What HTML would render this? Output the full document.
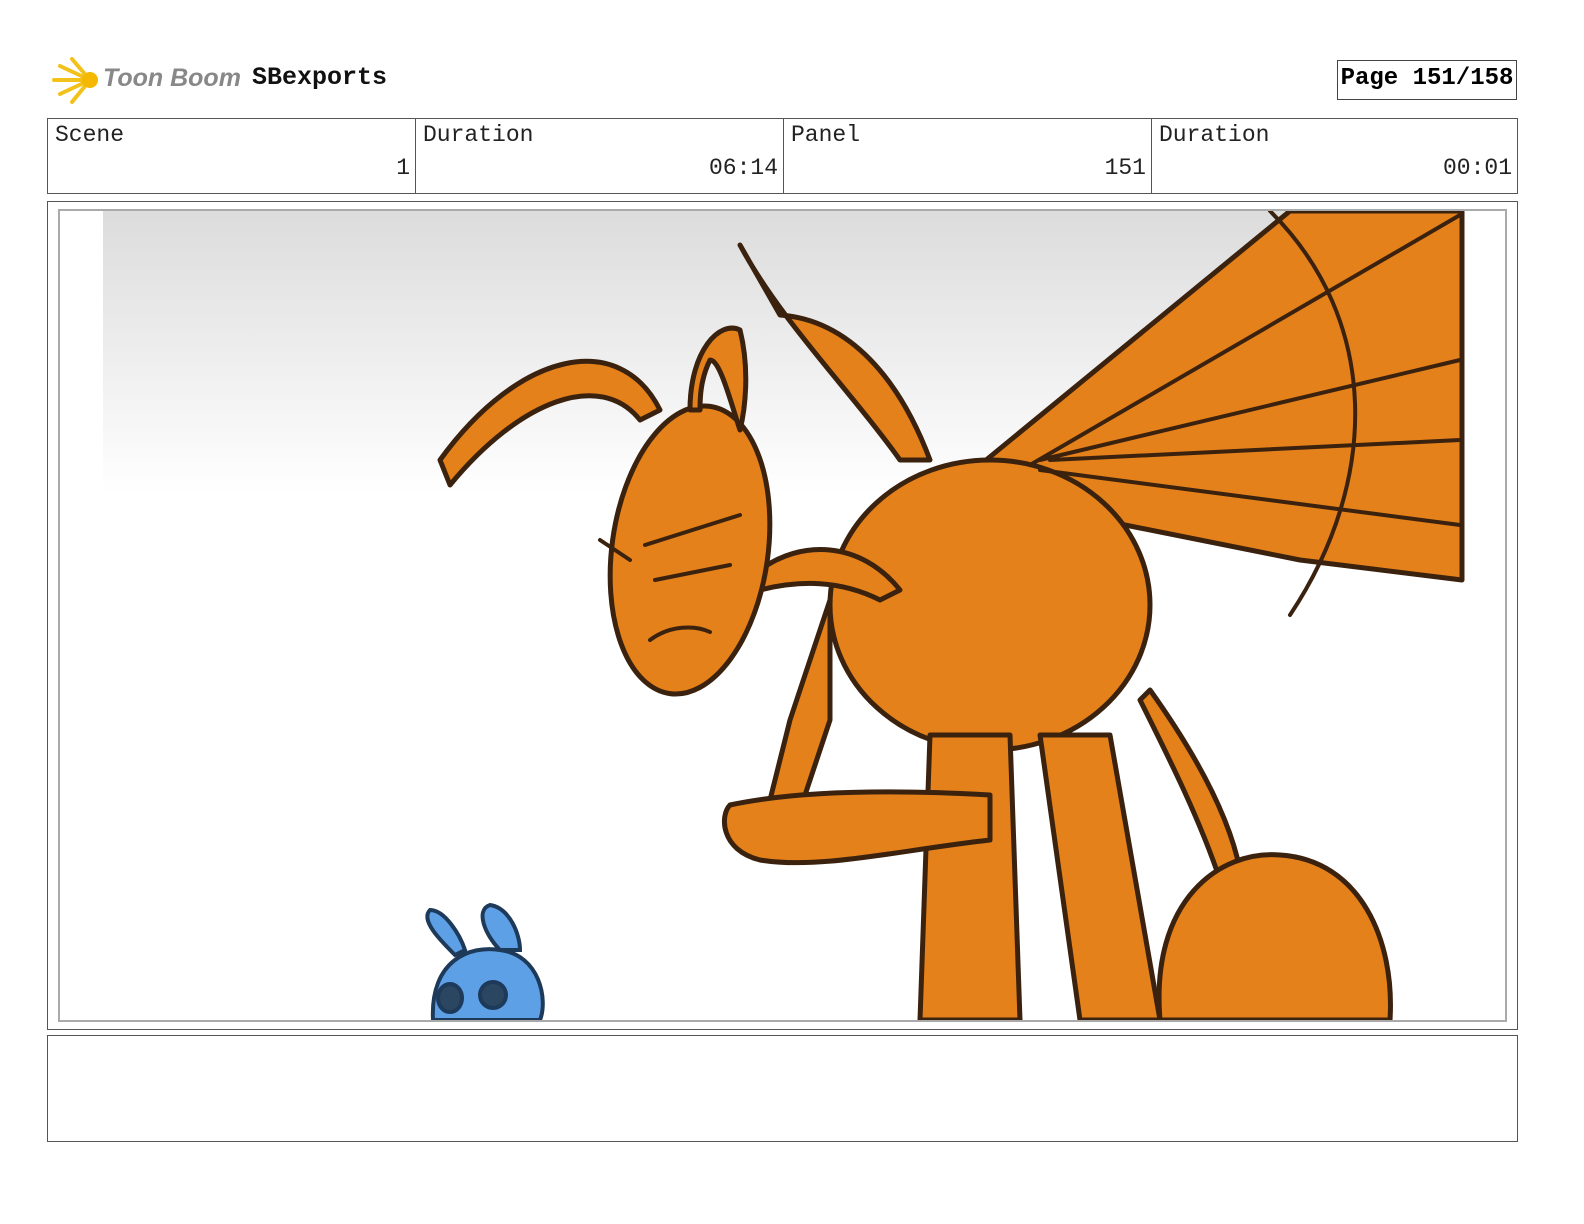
<!DOCTYPE html>
<html><head><style>
body{margin:0;width:1584px;height:1224px;background:#fff;position:relative;overflow:hidden;font-family:"Liberation Mono",monospace}
.a{position:absolute}
.cell{position:absolute;top:118px;height:76px;border:1px solid #555;box-sizing:border-box}
.lbl{position:absolute;left:7px;top:3px;font-size:23px;color:#222}
.val{position:absolute;right:5px;top:36px;font-size:23px;color:#222}
</style></head><body>
<svg class="a" style="left:50px;top:56px" width="52" height="50" viewBox="0 0 52 50">
<g stroke="#f2c21a" stroke-width="4" stroke-linecap="round">
<line x1="40" y1="24" x2="4" y2="24"/><line x1="40" y1="24" x2="10" y2="10"/><line x1="40" y1="24" x2="10" y2="38"/>
<line x1="40" y1="24" x2="22" y2="3"/><line x1="40" y1="24" x2="22" y2="46"/></g>
<circle cx="40" cy="24" r="8" fill="#f5b800"/></svg>
<div class="a" style="left:103px;top:64px;font-family:'Liberation Sans',sans-serif;font-style:italic;font-weight:bold;font-size:25px;color:#888">Toon Boom</div>
<div class="a" style="left:252px;top:63px;font-weight:bold;font-size:25px;color:#111">SBexports</div>
<div class="a" style="left:1337px;top:60px;width:180px;height:40px;border:1px solid #444;box-sizing:border-box;font-weight:bold;font-size:24px;text-align:center;line-height:36px">Page 151/158</div>
<div class="cell" style="left:47px;width:369px"><span class="lbl">Scene</span><span class="val">1</span></div>
<div class="cell" style="left:415px;width:369px"><span class="lbl">Duration</span><span class="val">06:14</span></div>
<div class="cell" style="left:783px;width:369px"><span class="lbl">Panel</span><span class="val">151</span></div>
<div class="cell" style="left:1151px;width:367px"><span class="lbl">Duration</span><span class="val">00:01</span></div>
<div class="a" style="left:47px;top:201px;width:1471px;height:829px;border:1px solid #555;box-sizing:border-box"></div>
<div class="a" style="left:58px;top:209px;width:1449px;height:813px;border:2px solid #aaa;box-sizing:border-box"></div>
<svg class="a" style="left:60px;top:211px" width="1445" height="809" viewBox="60 211 1445 809">
<defs><linearGradient id="g" x1="0" y1="0" x2="0" y2="1"><stop offset="0" stop-color="#dcdcdc"/><stop offset="0.35" stop-color="#fff"/></linearGradient></defs>
<rect x="103" y="211" width="1359" height="809" fill="url(#g)"/>
<g fill="#e5811a" stroke="#3b220f" stroke-width="5" stroke-linejoin="round">
<path d="M980 465 L1290 211 L1462 211 L1462 580 L1300 560 L1100 520 Z"/>
<path d="M740 245 C780 320 850 390 900 460 L930 460 C900 380 850 320 780 315 Z"/>
<ellipse cx="990" cy="605" rx="160" ry="145"/>
<path d="M930 735 L920 1020 L1020 1020 L1010 735 Z"/>
<path d="M1040 735 L1080 1020 L1160 1020 L1110 735 Z"/>
<path d="M1150 690 C1200 760 1230 820 1240 870 L1220 880 C1200 820 1170 760 1140 700 Z"/>
<path d="M1160 1020 C1150 900 1220 850 1280 855 C1360 860 1395 940 1390 1020 Z"/>
<path d="M830 600 L790 720 L770 800 L800 810 L830 720 Z"/>
<path d="M730 805 C800 790 900 790 990 795 L990 840 C900 850 820 870 760 860 C720 850 720 815 730 805 Z"/>
<path d="M760 570 C800 540 860 540 900 590 L880 600 C840 580 800 580 760 590 Z"/>
<ellipse cx="690" cy="550" rx="78" ry="145" transform="rotate(8 690 550)"/>
<path d="M660 410 C620 330 520 350 440 460 L450 485 C520 400 600 370 640 420 Z"/>
<path d="M690 410 C690 350 720 320 740 330 C750 370 745 410 740 430 C730 400 720 360 710 360 C700 380 700 400 700 410 Z"/>
</g>
<g fill="none" stroke="#3b220f" stroke-width="4" stroke-linecap="round">
<path d="M1030 465 L1460 215"/><path d="M1040 460 L1460 360"/><path d="M1050 460 L1460 440"/><path d="M1040 470 L1460 525"/>
<path d="M1270 211 C1380 320 1380 480 1290 615"/>
<path d="M645 545 L740 515"/><path d="M655 580 L730 565"/><path d="M650 640 C670 625 695 625 710 632"/>
<path d="M600 540 L630 560"/>
</g>
<g fill="#5ea0e6" stroke="#1e3a5a" stroke-width="4">
<path d="M433 1020 C430 960 470 945 500 950 C540 955 548 1000 540 1020 Z"/>
<path d="M455 955 C440 940 420 920 430 910 C445 910 460 935 465 950 Z"/>
<path d="M500 950 C485 935 475 910 490 905 C510 908 520 935 520 950 Z"/>
<ellipse cx="450" cy="998" rx="12" ry="14" fill="#2a4660"/>
<ellipse cx="493" cy="995" rx="13" ry="13" fill="#2a4660"/>
</g>
</svg>
<div class="a" style="left:47px;top:1035px;width:1471px;height:107px;border:1px solid #555;box-sizing:border-box"></div>
</body></html>
